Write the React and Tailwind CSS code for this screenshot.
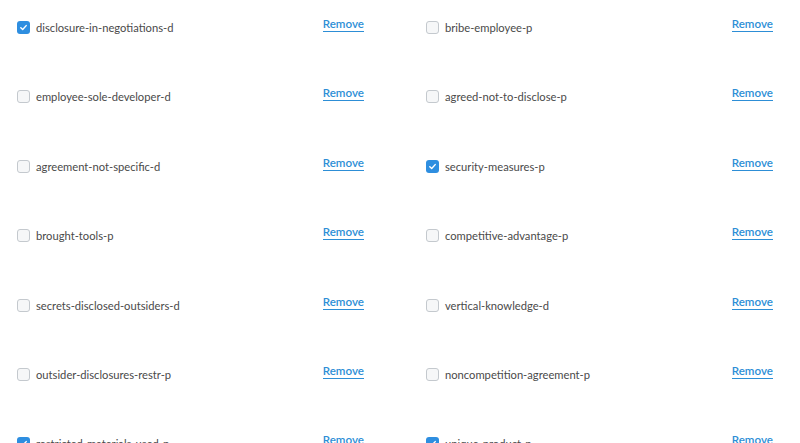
import React from 'react';

const rows = [
  [{ name: 'disclosure-in-negotiations-d', checked: true }, { name: 'bribe-employee-p', checked: false }],
  [{ name: 'employee-sole-developer-d', checked: false }, { name: 'agreed-not-to-disclose-p', checked: false }],
  [{ name: 'agreement-not-specific-d', checked: false }, { name: 'security-measures-p', checked: true }],
  [{ name: 'brought-tools-p', checked: false }, { name: 'competitive-advantage-p', checked: false }],
  [{ name: 'secrets-disclosed-outsiders-d', checked: false }, { name: 'vertical-knowledge-d', checked: false }],
  [{ name: 'outsider-disclosures-restr-p', checked: false }, { name: 'noncompetition-agreement-p', checked: false }],
  [{ name: 'restricted-materials-used-p', checked: true }, { name: 'unique-product-p', checked: true }],
];

const Checkbox = ({ checked }) =>
  checked ? (
    <span className="w-[13px] h-[13px] shrink-0 rounded-[3px] bg-[#2e8ee0] flex items-center justify-center">
      <svg width="9" height="9" viewBox="0 0 10 10" fill="none">
        <path d="M2 5.2 L4.1 7.2 L8 2.9" stroke="white" strokeWidth="1.6" strokeLinecap="round" strokeLinejoin="round" />
      </svg>
    </span>
  ) : (
    <span className="w-[13px] h-[13px] shrink-0 rounded-[3px] border border-[#c4c9ce] bg-[#f6f7f8]" />
  );

const Item = ({ name, checked }) => (
  <div className="w-[409px] shrink-0 h-[69.4px] flex items-start pl-[17px]">
    <div className="flex items-center mt-[21px]">
      <Checkbox checked={checked} />
      <span className="ml-[6px] text-[11.2px] text-[#4a4a4a] leading-[13px]">{name}</span>
    </div>
    <div className="flex-1" />
    <span className="mt-[18px] mr-[45px] text-[11.6px] font-semibold text-[#2d8ed6] leading-[12px] border-b border-[#2d8ed6] pb-[1px]">
      Remove
    </span>
  </div>
);

export default function App() {
  return (
    <div className="w-[800px] h-[443px] overflow-hidden bg-white" style={{ fontFamily: 'Lato, "Open Sans", sans-serif' }}>
      {rows.map((r, i) => (
        <div key={i} className="flex">
          {r.map((it) => (
            <Item key={it.name} {...it} />
          ))}
        </div>
      ))}
    </div>
  );
}
